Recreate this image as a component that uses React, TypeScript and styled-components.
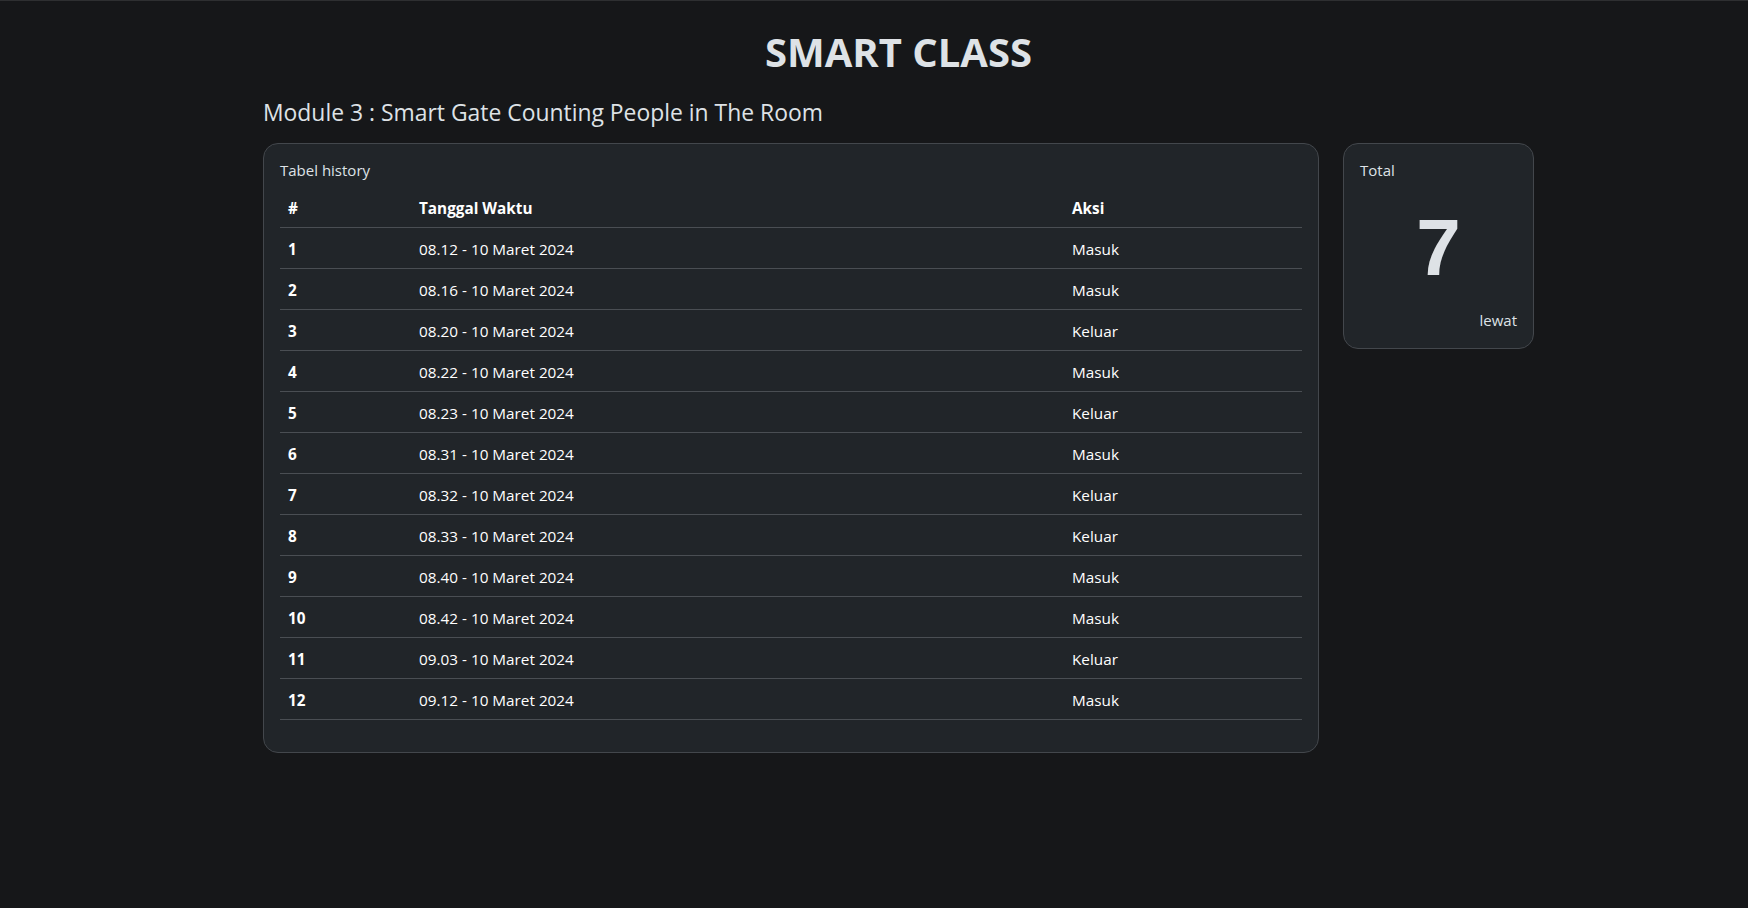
import React from 'react';
import styled, { createGlobalStyle } from 'styled-components';

const rows = [
    { time: '08.12', aksi: 'Masuk' },
    { time: '08.16', aksi: 'Masuk' },
    { time: '08.20', aksi: 'Keluar' },
    { time: '08.22', aksi: 'Masuk' },
    { time: '08.23', aksi: 'Keluar' },
    { time: '08.31', aksi: 'Masuk' },
    { time: '08.32', aksi: 'Keluar' },
    { time: '08.33', aksi: 'Keluar' },
    { time: '08.40', aksi: 'Masuk' },
    { time: '08.42', aksi: 'Masuk' },
    { time: '09.03', aksi: 'Keluar' },
    { time: '09.12', aksi: 'Masuk' }
];

function App() {
    return (
        <>
            <GlobalStyle />
            <Page>
                <Container>
                    <Title>SMART CLASS</Title>
                    <Subtitle>Module 3 : Smart Gate Counting People in The Room</Subtitle>
                    <Columns>
                        <Card>
                            <CardLabel>Tabel history</CardLabel>
                            <Table>
                                <colgroup>
                                    <col style={{ width: 131 }} />
                                    <col style={{ width: 653 }} />
                                    <col />
                                </colgroup>
                                <thead>
                                    <tr>
                                        <Th>#</Th>
                                        <Th>Tanggal Waktu</Th>
                                        <Th>Aksi</Th>
                                    </tr>
                                </thead>
                                <tbody>
                                    {rows.map((row, i) => (
                                        <tr key={i}>
                                            <Th>{i + 1}</Th>
                                            <Td>{row.time} - 10 Maret 2024</Td>
                                            <Td>{row.aksi}</Td>
                                        </tr>
                                    ))}
                                </tbody>
                            </Table>
                        </Card>
                        <TotalCard>
                            <CardLabel $gap={20}>Total</CardLabel>
                            <Count>7</Count>
                            <Unit>lewat</Unit>
                        </TotalCard>
                    </Columns>
                </Container>
            </Page>
        </>
    );
}

const GlobalStyle = createGlobalStyle`
    html, body {
        margin: 0;
        padding: 0;
        background: #161719;
    }

    body {
        border-top: 1px solid #2e2f31;
        color: #dee2e6;
        font-family: "Open Sans", "Noto Sans", sans-serif;
        font-size: 16px;
        line-height: 24px;
    }
`;

const Page = styled.div`
    min-height: 907px;
    padding-top: 27px;
    box-sizing: border-box;
`;

const Container = styled.div`
    width: 1271px;
    margin-left: 263px;
`;

const Title = styled.h1`
    margin: 0 0 23px;
    text-align: center;
    font-size: 40px;
    line-height: 48px;
    font-weight: 700;
    color: #dee2e6;
`;

const Subtitle = styled.h4`
    margin: 0 0 15px;
    font-size: 22.9px;
    line-height: 28.8px;
    font-weight: 400;
    color: #dee2e6;
`;

const Columns = styled.div`
    display: grid;
    grid-template-columns: 1056px 191px;
    gap: 24px;
    align-items: start;
`;

const Card = styled.div`
    background: #212529;
    border: 1px solid #43474c;
    border-radius: 15px;
    padding: 16px;
`;

const CardLabel = styled.div<{ $gap?: number }>`
    font-size: 15px;
    line-height: 20px;
    margin-bottom: ${p => p.$gap ?? 7}px;
    color: #dee2e6;
`;

const Table = styled.table`
    width: 100%;
    border-collapse: collapse;
    margin-bottom: 16px;
    table-layout: fixed;
    font-size: 15.3px;
    color: #ffffff;
`;

const Th = styled.th`
    text-align: left;
    font-weight: 700;
    padding: 9px 8px 7px;
    line-height: 24px;
    border-bottom: 1px solid #4a4e53;
`;

const Td = styled.td`
    padding: 9px 8px 7px;
    line-height: 24px;
    border-bottom: 1px solid #4a4e53;
`;

const TotalCard = styled(Card)`
    display: flex;
    flex-direction: column;
`;

const Count = styled.div`
    font-family: "Liberation Sans", Arial, sans-serif;
    font-size: 80px;
    line-height: 96px;
    font-weight: 700;
    text-align: center;
    color: #dee2e6;
`;

const Unit = styled.div`
    margin-top: 12px;
    font-size: 15px;
    line-height: 24px;
    text-align: right;
`;

export default App;
